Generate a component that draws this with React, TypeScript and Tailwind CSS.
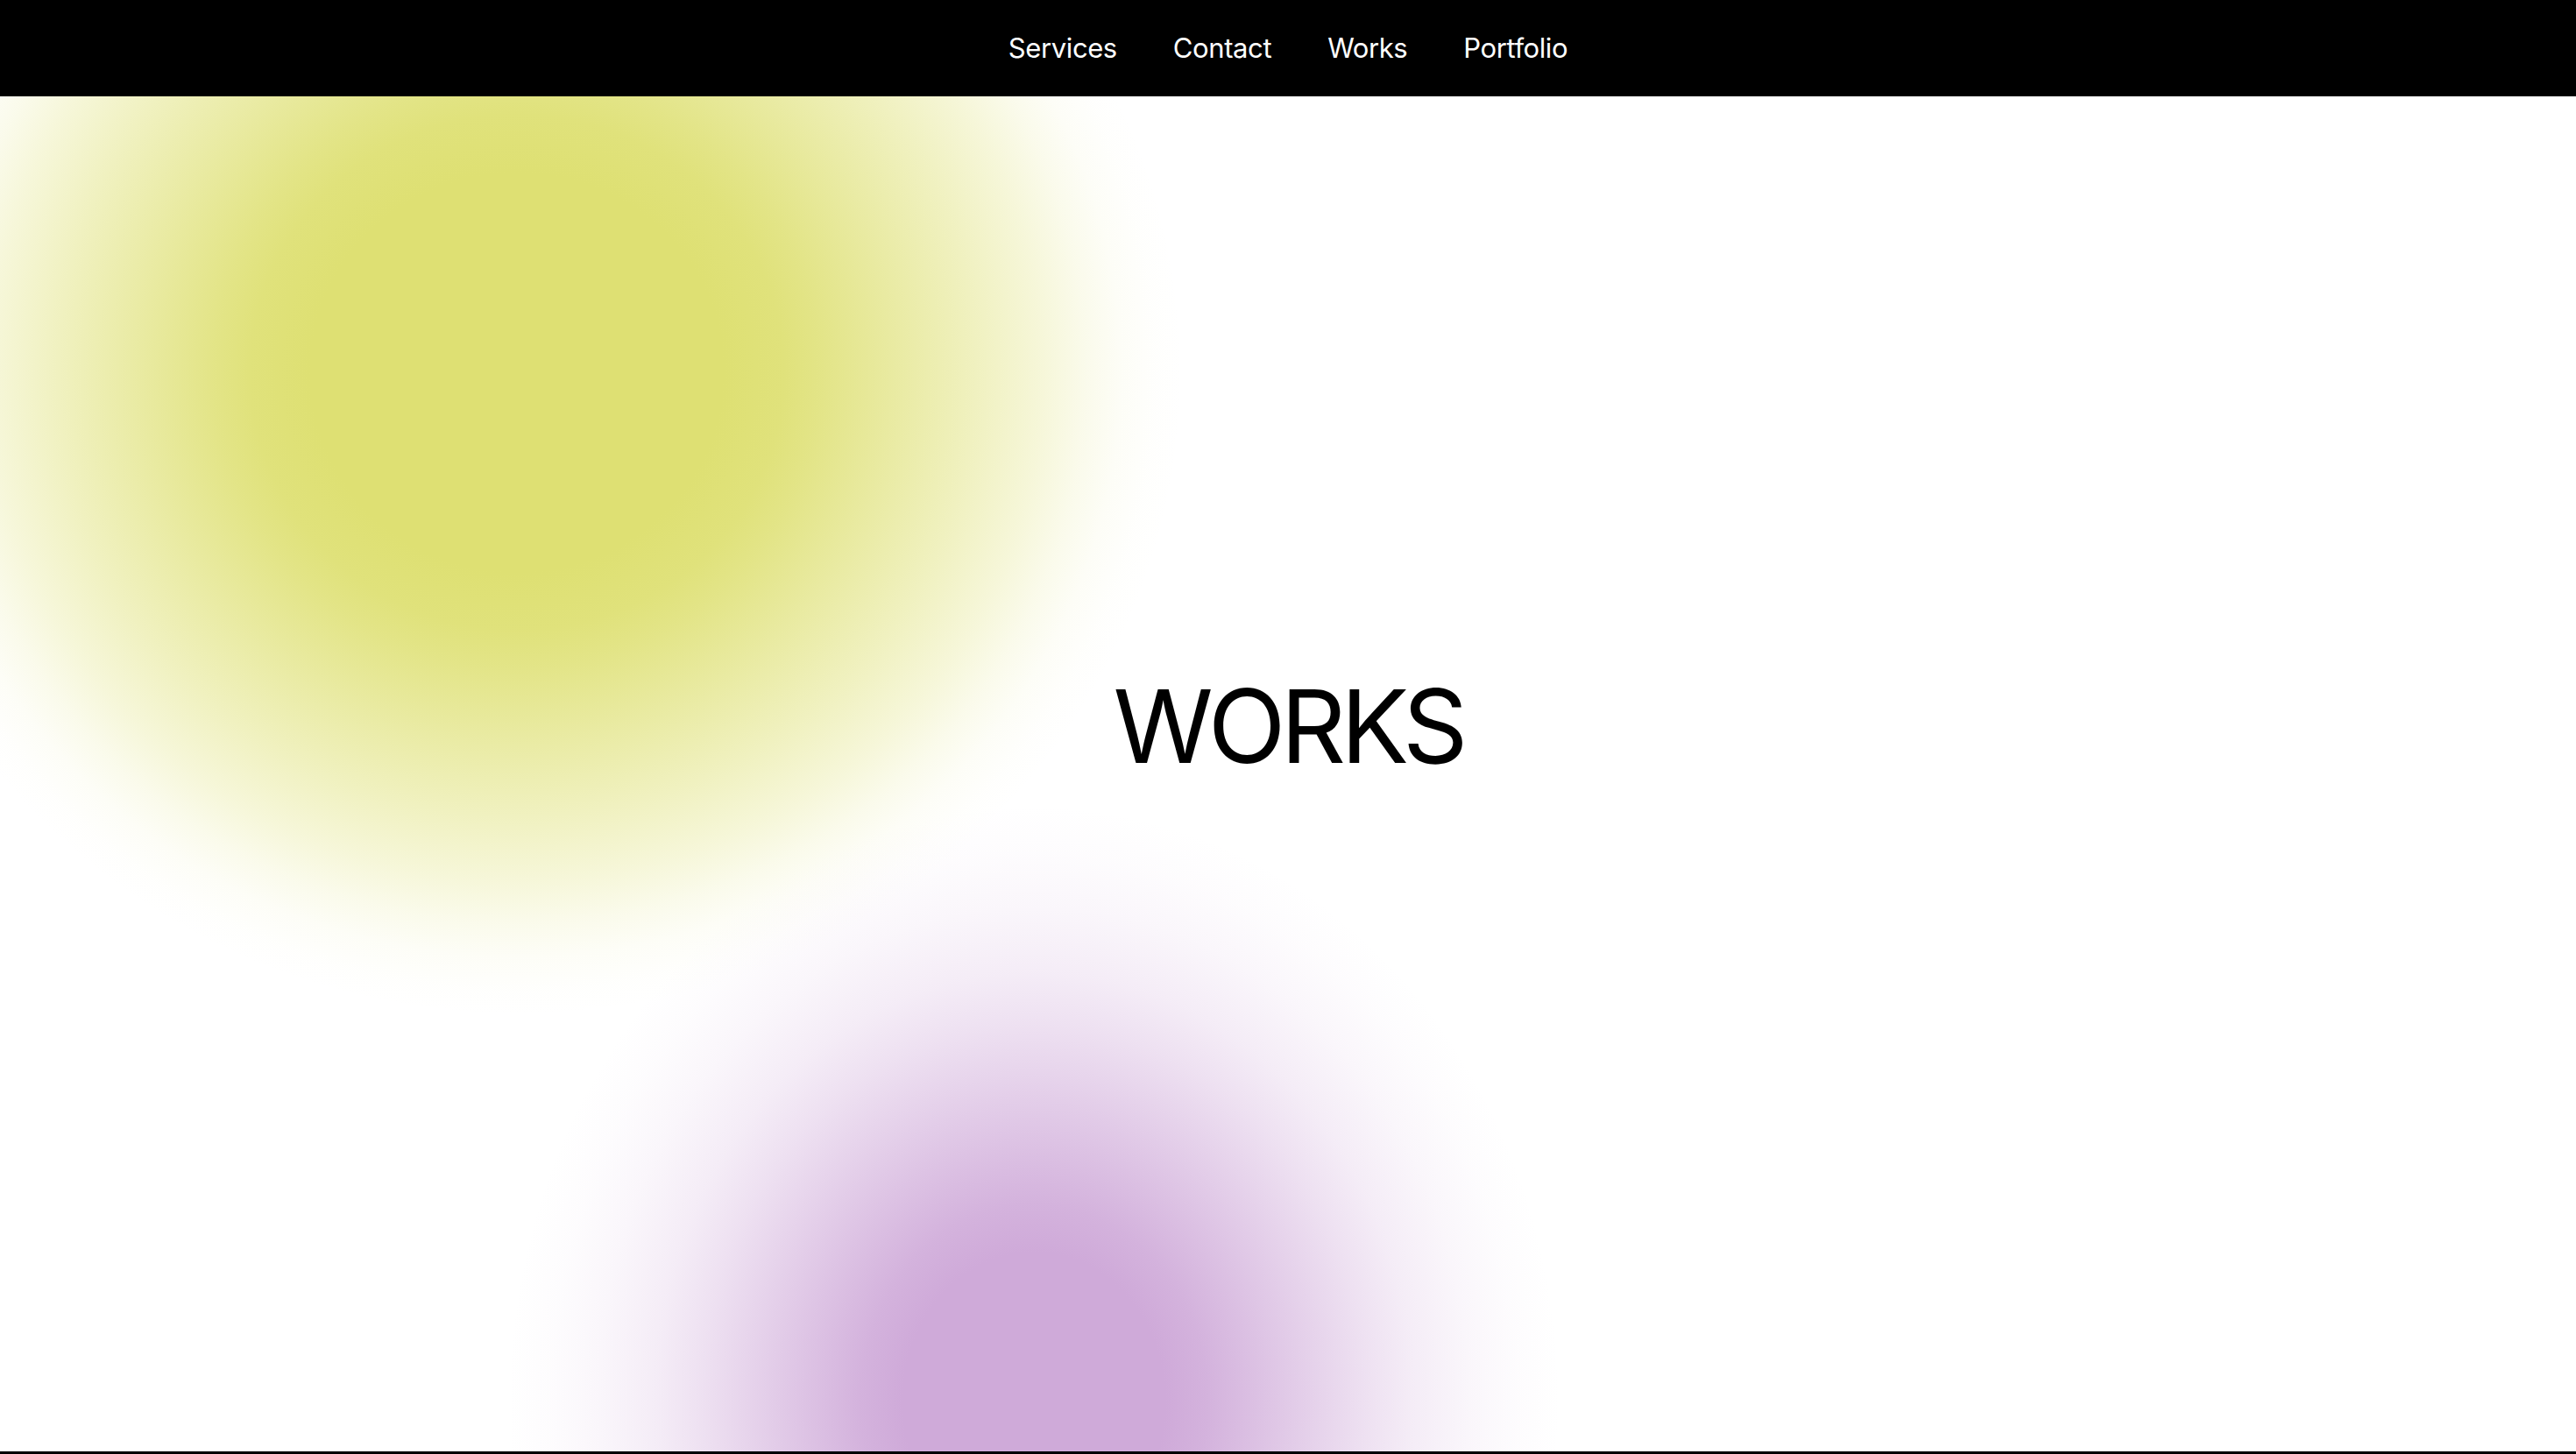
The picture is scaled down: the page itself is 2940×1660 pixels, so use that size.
import React from "react";

export default function App() {
  const links = ["Services", "Contact", "Works", "Portfolio"];
  return (
    <div className="relative w-full bg-white" style={{ fontFamily: "Inter, 'Noto Sans', sans-serif" }}>
      <nav className="fixed top-0 inset-x-0 z-20 h-[110px] pb-[2px] bg-black flex items-center justify-center gap-16">
        {links.map((l) => (
          <a key={l} href="#" className="text-white text-[31px] tracking-[-0.4px] leading-none">
            {l}
          </a>
        ))}
      </nav>
      <section className="relative h-screen w-full overflow-hidden border-b-[3px] border-black flex items-center justify-center">
        <div className="absolute left-[-170px] top-[-310px] w-[1520px] h-[1470px] bg-[radial-gradient(closest-side,rgba(222,224,115,1)_0%,rgba(222,224,115,1)_31%,rgba(222,224,115,0.94)_40%,rgba(222,224,115,0.86)_45.5%,rgba(222,224,115,0.66)_57%,rgba(222,224,115,0.45)_69%,rgba(222,224,115,0.27)_79%,rgba(222,224,115,0.14)_85.5%,rgba(222,224,115,0.06)_90.8%,rgba(222,224,115,0.015)_96%,rgba(222,224,115,0)_100%)]" />
        <div className="absolute left-[580px] top-[920px] w-[1200px] h-[1360px] bg-[radial-gradient(closest-side,rgba(207,170,217,1)_0%,rgba(207,170,217,1)_25%,rgba(207,170,217,0.9)_33%,rgba(207,170,217,0.72)_43%,rgba(207,170,217,0.52)_54%,rgba(207,170,217,0.36)_63%,rgba(207,170,217,0.22)_72%,rgba(207,170,217,0.1)_83%,rgba(207,170,217,0.035)_92%,rgba(207,170,217,0)_100%)]" />
        <h1 className="relative z-10 text-black text-[116px] tracking-[-6px] font-normal leading-none">WORKS</h1>
      </section>
    </div>
  );
}
